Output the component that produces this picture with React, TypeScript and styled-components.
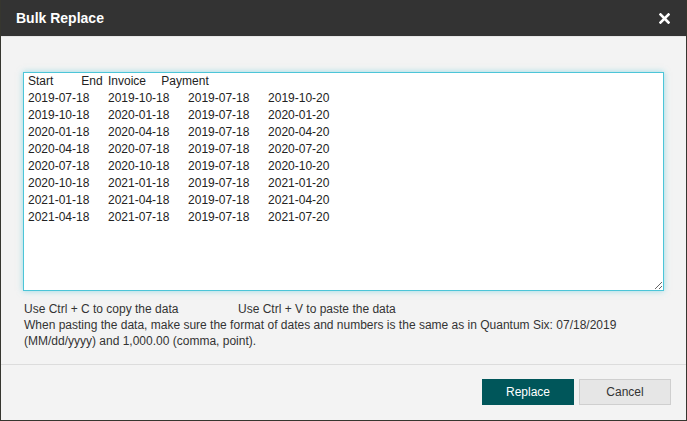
import React from "react";
import styled, { createGlobalStyle } from "styled-components";

const Global = createGlobalStyle`
  html, body { margin: 0; padding: 0; background: #f3f3f3; }
  body { font-family: "Liberation Sans", Arial, sans-serif; }
  * { box-sizing: border-box; }
`;

const Dialog = styled.div`
  width: 687px;
  height: 421px;
  display: flex;
  flex-direction: column;
  background: #f3f3f3;
  border: 1px solid #36362f;
  border-top: none;
`;

const Header = styled.div`
  height: 37px;
  flex: none;
  display: flex;
  align-items: center;
  justify-content: space-between;
  padding: 0 16px 0 15px;
  background: #333333;
  border-bottom: 1px solid #e6e6e6;
`;

const Title = styled.h1`
  margin: 0;
  font-size: 14px;
  font-weight: bold;
  color: #ffffff;
`;

const Close = styled.button`
  border: none;
  background: none;
  padding: 0;
  width: 11px;
  height: 11px;
  display: flex;
  cursor: pointer;
`;

const Body = styled.div`
  flex: 1;
  padding: 35px 22px 0 22px;
  display: flex;
  flex-direction: column;
`;

const DataArea = styled.textarea`
  width: 641px;
  height: 219px;
  margin: 0;
  padding: 0 4px;
  border: 1px solid #4cc5d8;
  box-shadow: 0 0 6px rgba(76, 197, 216, 0.55);
  outline: none;
  background: #ffffff;
  color: #222;
  font-family: "Liberation Sans", Arial, sans-serif;
  font-size: 12px;
  line-height: 17px;
  tab-size: 8;
  white-space: pre;
  overflow: hidden;
`;

const Help = styled.div`
  margin-top: 10px;
  font-size: 12px;
  line-height: 16px;
  color: #333;
  padding-left: 1px;
`;

const HelpRow = styled.div`
  display: flex;
`;

const HelpCell = styled.span<{ $w?: number }>`
  width: ${(p) => (p.$w ? `${p.$w}px` : "auto")};
  flex: none;
`;

const Footer = styled.div`
  height: 56px;
  flex: none;
  border-top: 1px solid #dcdcdc;
  display: flex;
  justify-content: flex-end;
  align-items: flex-start;
  gap: 5px;
  padding: 14px 15px 0 0;
`;

const Btn = styled.button<{ $primary?: boolean }>`
  width: 92px;
  height: 26px;
  font-family: "Liberation Sans", Arial, sans-serif;
  font-size: 12px;
  cursor: pointer;
  border: 1px solid ${(p) => (p.$primary ? "#00565a" : "#cfcfcf")};
  background: ${(p) => (p.$primary ? "#00565a" : "#e6e6e6")};
  color: ${(p) => (p.$primary ? "#ffffff" : "#333")};
`;

const data = [
  "Start\tEnd\tInvoice\tPayment",
  "2019-07-18\t2019-10-18\t2019-07-18\t2019-10-20",
  "2019-10-18\t2020-01-18\t2019-07-18\t2020-01-20",
  "2020-01-18\t2020-04-18\t2019-07-18\t2020-04-20",
  "2020-04-18\t2020-07-18\t2019-07-18\t2020-07-20",
  "2020-07-18\t2020-10-18\t2019-07-18\t2020-10-20",
  "2020-10-18\t2021-01-18\t2019-07-18\t2021-01-20",
  "2021-01-18\t2021-04-18\t2019-07-18\t2021-04-20",
  "2021-04-18\t2021-07-18\t2019-07-18\t2021-07-20",
].join("\n");

export default function App() {
  return (
    <>
      <Global />
      <Dialog>
        <Header>
          <Title>Bulk Replace</Title>
          <Close aria-label="Close">
            <svg width="11" height="11" viewBox="0 0 11 11">
              <path d="M1.5 1.5 L9.5 9.5 M9.5 1.5 L1.5 9.5" stroke="#fff" strokeWidth="2.6" strokeLinecap="square" />
            </svg>
          </Close>
        </Header>
        <Body>
          <DataArea defaultValue={data} spellCheck={false} />
          <Help>
            <HelpRow>
              <HelpCell $w={214}>Use Ctrl + C to copy the data</HelpCell>
              <HelpCell>Use Ctrl + V to paste the data</HelpCell>
            </HelpRow>
            <div>
              When pasting the data, make sure the format of dates and numbers is the same as in Quantum Six: 07/18/2019
              (MM/dd/yyyy) and 1,000.00 (comma, point).
            </div>
          </Help>
        </Body>
        <Footer>
          <Btn $primary>Replace</Btn>
          <Btn>Cancel</Btn>
        </Footer>
      </Dialog>
    </>
  );
}
